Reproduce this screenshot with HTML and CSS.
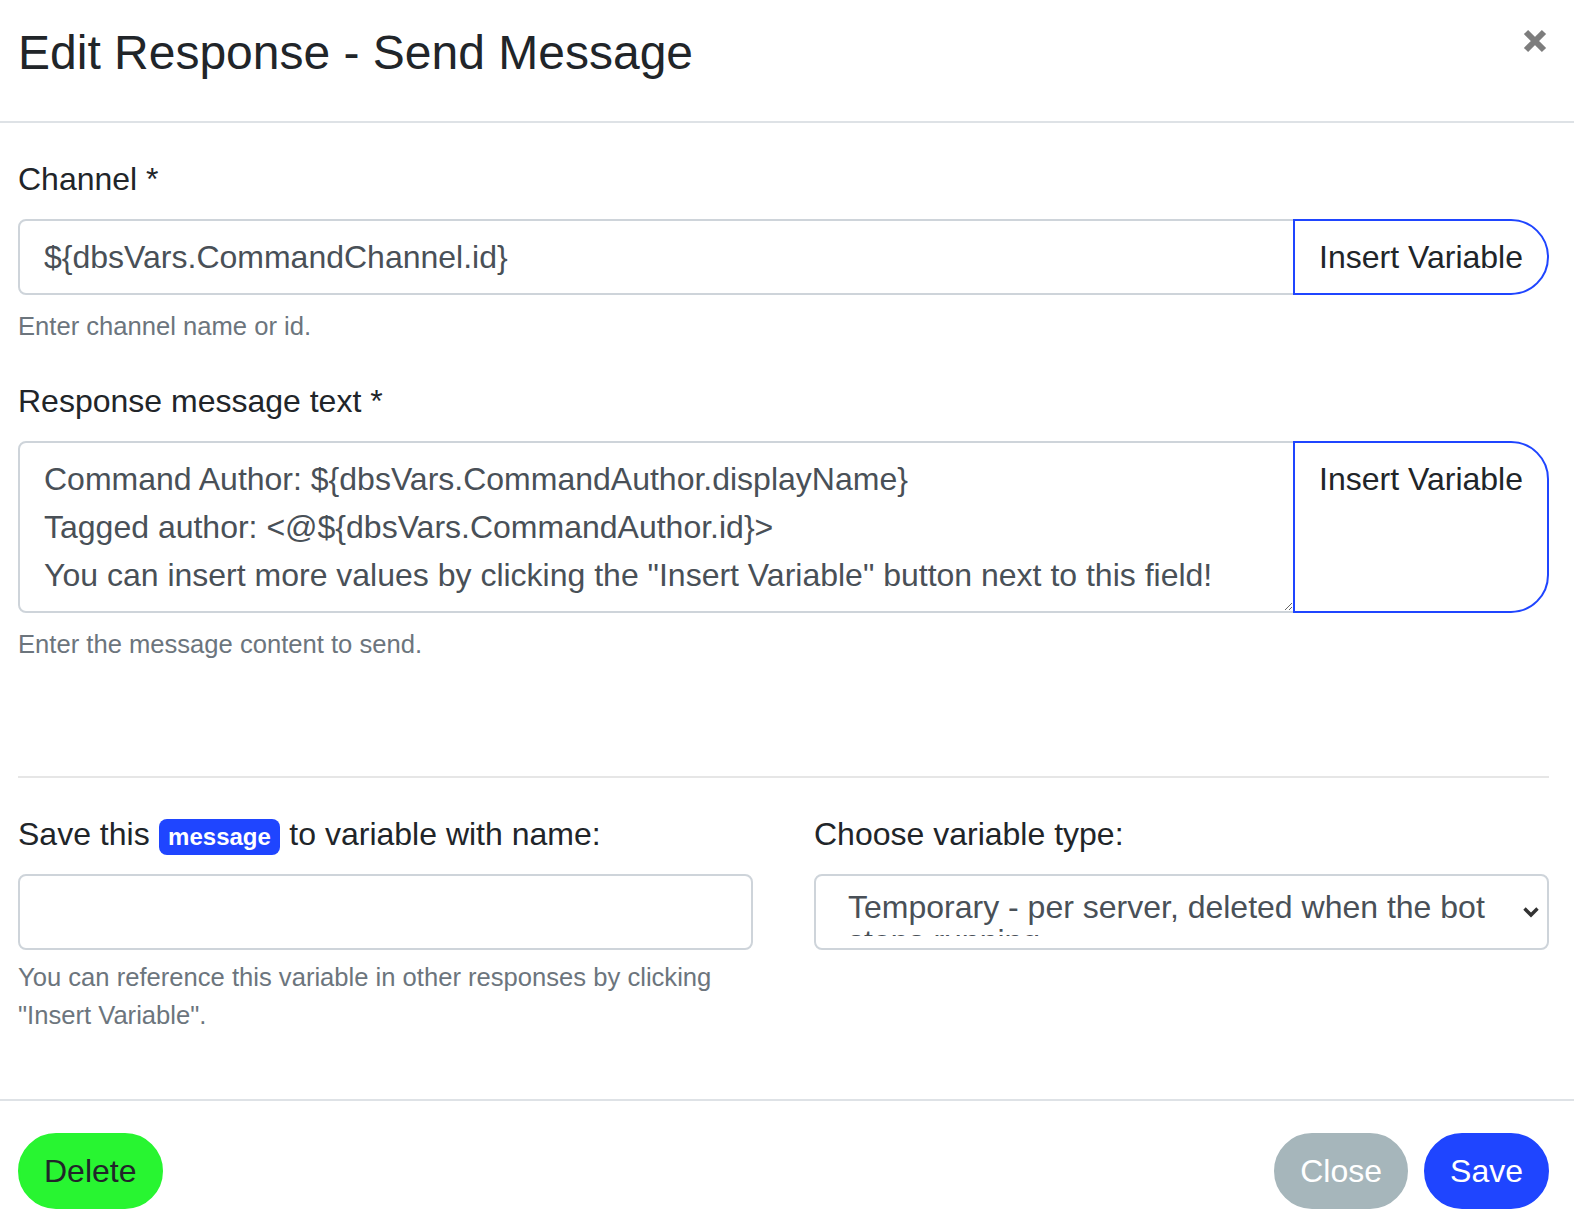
FILE: index.html
```html
<!DOCTYPE html>
<html lang="en">
<head>
<meta charset="utf-8">
<title>Edit Response - Send Message</title>
<link rel="stylesheet" href="styles.css">
</head>
<body>
<div class="modal">
  <div class="modal-header">
    <h4 class="modal-title">Edit Response - Send Message</h4>
    <button class="close" type="button" aria-label="Close">
      <svg width="24" height="24" viewBox="0 0 24 24"><path d="M3 3 L21 21 M21 3 L3 21" stroke="#7d7d7d" stroke-width="6" stroke-linecap="butt"/></svg>
    </button>
  </div>
  <div class="modal-body">
    <div class="form-group">
      <label class="field-label">Channel *</label>
      <div class="input-group">
        <input class="form-control group-control" type="text" value="${dbsVars.CommandChannel.id}">
        <button class="btn-var" type="button">Insert Variable</button>
      </div>
      <small class="form-text group-help">Enter channel name or id.</small>
    </div>
    <div class="form-group">
      <label class="field-label">Response message text *</label>
      <div class="input-group">
        <textarea class="form-control group-control textarea" rows="3">Command Author: ${dbsVars.CommandAuthor.displayName}
Tagged author: &lt;@${dbsVars.CommandAuthor.id}&gt;
You can insert more values by clicking the "Insert Variable" button next to this field!</textarea>
        <button class="btn-var" type="button">Insert Variable</button>
      </div>
      <small class="form-text group-help">Enter the message content to send.</small>
    </div>
    <hr class="divider">
    <div class="row">
      <div class="form-group">
        <label class="field-label">Save this <span class="badge">message</span> to variable with name:</label>
        <input class="form-control" type="text" value="">
        <small class="form-text">You can reference this variable in other responses by clicking "Insert Variable".</small>
      </div>
      <div class="form-group">
        <label class="field-label">Choose variable type:</label>
        <div class="select">
          <div class="select-text">Temporary - per server, deleted when the bot stops running</div>
          <svg class="chevron" width="18" height="12" viewBox="0 0 18 12"><path d="M2.5 2.5 L9 9 L15.5 2.5" fill="none" stroke="#333" stroke-width="3.4"/></svg>
        </div>
      </div>
    </div>
  </div>
  <div class="modal-footer">
    <button class="btn btn-delete" type="button">Delete</button>
    <div class="spacer"></div>
    <button class="btn btn-close" type="button">Close</button>
    <button class="btn btn-save" type="button">Save</button>
  </div>
</div>
</body>
</html>
```
FILE: styles.css
```css
html, body {
  margin: 0;
  background: #fff;
}
body {
  font-family: "Liberation Sans", Arial, Helvetica, sans-serif;
  font-size: 32px;
  line-height: 1.5;
  color: #212529;
}
.modal-header {
  display: flex;
  align-items: flex-start;
  padding: 17px 27px 32px 18px;
  border-bottom: 2px solid #dee2e6;
}
.modal-title {
  flex: 1;
  margin: 0;
  font-size: 48px;
  font-weight: 400;
  line-height: 72px;
}
.close {
  border: 0;
  background: none;
  padding: 0;
  margin-top: 12px;
  width: 24px;
  height: 24px;
  display: block;
}
.close svg { display: block; }
.modal-body {
  padding: 32px 25px 32px 18px;
}
.form-group {
  margin-bottom: 32px;
}
.field-label {
  display: block;
  margin-bottom: 16px;
}
.input-group {
  display: flex;
  align-items: stretch;
}
.form-control {
  display: block;
  width: 100%;
  box-sizing: border-box;
  height: 76px;
  margin: 0;
  padding: 12px 24px;
  font-family: inherit;
  font-size: 32px;
  line-height: 48px;
  color: #495057;
  background: #fff;
  border: 2px solid #ced4da;
  border-radius: 8px;
  outline: none;
}
.group-control {
  flex: 1;
  min-width: 0;
  width: auto;
  border-radius: 8px 0 0 8px;
}
.textarea {
  height: 172px;
  overflow: hidden;
  resize: vertical;
}
.btn-var {
  flex: none;
  margin: 0 0 0 -2px;
  padding: 12px 24px;
  font-family: inherit;
  font-size: 32px;
  line-height: 48px;
  color: #212529;
  background: #fff;
  border: 2px solid #1f45ff;
  border-radius: 0 38px 38px 0;
  text-align: center;
  align-self: stretch;
  display: flex;
  align-items: flex-start;
}
.form-text {
  display: block;
  margin-top: 8px;
  font-size: 25.6px;
  line-height: 38.4px;
  color: #6c757d;
}
.group-help {
  margin-top: 12px;
}
.divider {
  margin: 112px 0 32px;
  border: 0;
  border-top: 2px solid #e6e6e6;
  height: 0;
}
.row {
  display: grid;
  grid-template-columns: 1fr 1fr;
  column-gap: 61px;
}
.badge {
  display: inline-block;
  padding: 6px 9.6px;
  font-size: 24px;
  font-weight: 700;
  line-height: 1;
  color: #fff;
  background: #1f45ff;
  border-radius: 8px;
  vertical-align: baseline;
}
.select {
  position: relative;
  box-sizing: border-box;
  height: 76px;
  padding: 14px 50px 12px 32px;
  border: 2px solid #ced4da;
  border-radius: 8px;
  color: #495057;
  background: #fff;
}
.select-text {
  height: 46px;
  overflow: hidden;
  line-height: 34px;
}
.chevron {
  position: absolute;
  right: 7px;
  top: 30px;
}
.modal-footer {
  display: flex;
  align-items: center;
  padding: 24px 17px 24px 10px;
  border-top: 2px solid #dee2e6;
}
.spacer { flex: 1; }
.btn {
  margin: 8px;
  padding: 12px 24px;
  font-family: inherit;
  font-size: 32px;
  line-height: 48px;
  border: 2px solid transparent;
  border-radius: 38px;
}
.btn-delete {
  background: #28f531;
  border-color: #28f531;
  color: #212529;
}
.btn-close {
  background: #a6b6bb;
  border-color: #a6b6bb;
  color: #fff;
}
.btn-save {
  background: #1f45ff;
  border-color: #1f45ff;
  color: #fff;
}
```
